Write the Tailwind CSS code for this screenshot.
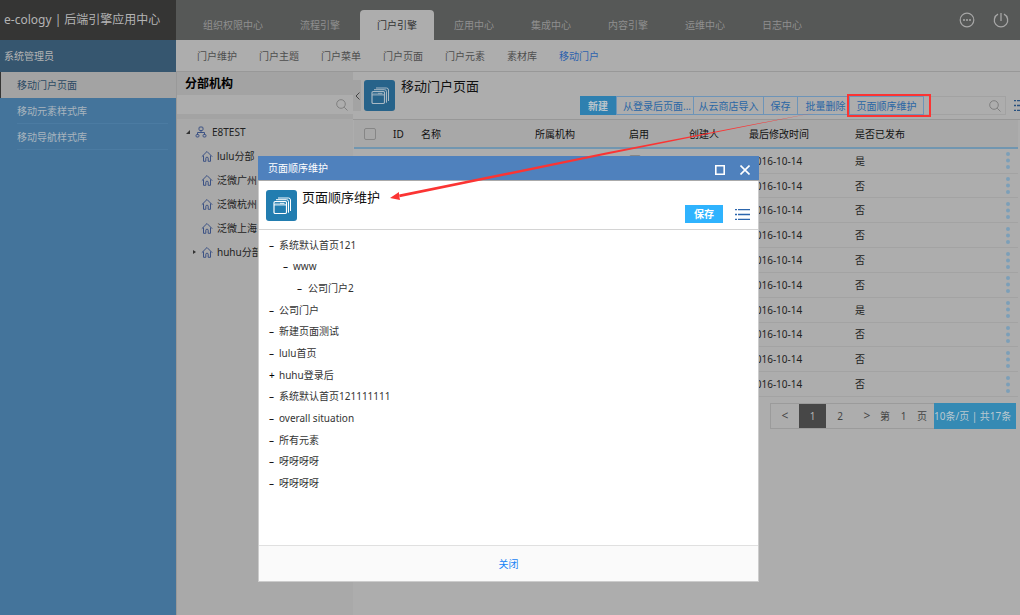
<!DOCTYPE html>
<html lang="zh-CN">
<head>
<meta charset="utf-8">
<title>e-cology | 后端引擎应用中心</title>
<script src="https://cdn.jsdelivr.net/npm/@tailwindcss/browser@4"></script>
</head>
<body class="relative flex h-screen overflow-hidden bg-[#adadad] font-['Noto_Sans','Noto_Sans_CJK_SC',sans-serif] text-[10px] leading-4 text-[#222]">
<svg class="hidden">
  <symbol id="home" viewBox="0 0 12 12"><path d="M.8 6.700 6 1.500l5.200 5.200M2.500 5.500v5.800h2.300V8.200q0-1 1.200-1t1.200 1v3.100h2.300V5.500" fill="none" stroke="currentColor"/></symbol>
  <symbol id="search" viewBox="0 0 12 12"><circle cx="5" cy="5" r="4.300" fill="none" stroke="currentColor"/><path d="m8.200 8.200 3.300 3.300" stroke="currentColor"/></symbol>
  <symbol id="pages" viewBox="0 0 31 31"><path d="M12 8h10.500q2 0 2 2v11M10 9.700h10.500q2 0 2 2v11" fill="none" stroke="currentColor"/><rect x="8" y="11.500" width="12.500" height="12" rx="1.200" fill="none" stroke="currentColor" stroke-width="1.200"/><path d="M8 14.900h12.500M9.500 13.300h1m1 0h1m1 0h5" stroke="currentColor"/></symbol>
  <symbol id="list" viewBox="0 0 15 11"><path d="M0 .5h2m1 0h12M0 5.500h2m1 0h12M0 10.500h2m1 0h12" stroke="currentColor" stroke-width="1.400"/></symbol>
</svg>

<aside class="flex w-44 shrink-0 flex-col bg-[#44749b]">
  <h1 class="flex h-10 items-center bg-[#353534] pl-1 text-[12px] whitespace-nowrap text-[#b4b4b4]">e-cology | 后端引擎应用中心</h1>
  <div class="flex h-8 items-center bg-[#36566f] pl-1 text-[#b4b4b4]">系统管理员</div>
  <nav class="flex flex-col text-[#a9b4be]">
    <a href="#" class="flex h-[26px] items-center border-l border-[#353534] bg-[#a3a3a3] pl-4 text-[#2b4a63]">移动门户页面</a>
    <a href="#" class="ml-[17px] mr-2 flex h-[26px] items-center border-b border-[#4b7ba2]">移动元素样式库</a>
    <a href="#" class="ml-[17px] mr-2 flex h-[26px] items-center border-b border-[#4b7ba2]">移动导航样式库</a>
  </nav>
</aside>

<div class="flex min-w-0 flex-1 flex-col">
  <header class="flex h-10 shrink-0 items-end justify-between bg-[#565857] pl-[10px] text-[#8f8f8f]">
    <nav class="flex gap-[3px] whitespace-nowrap">
      <a href="#" class="flex h-[30px] items-center px-[17px]">组织权限中心</a>
      <a href="#" class="flex h-[30px] items-center px-[17px]">流程引擎</a>
      <a href="#" class="flex h-[30px] items-center rounded-t bg-[#adadad] px-[17px] text-[#333]">门户引擎</a>
      <a href="#" class="flex h-[30px] items-center px-[17px]">应用中心</a>
      <a href="#" class="flex h-[30px] items-center px-[17px]">集成中心</a>
      <a href="#" class="flex h-[30px] items-center px-[17px]">内容引擎</a>
      <a href="#" class="flex h-[30px] items-center px-[17px]">运维中心</a>
      <a href="#" class="flex h-[30px] items-center px-[17px]">日志中心</a>
    </nav>
    <div class="flex gap-[18px] self-center pr-[11px] text-[#a6a6a6]">
      <button aria-label="更多"><svg class="size-4" viewBox="0 0 16 16" fill="none" stroke="currentColor"><circle cx="8" cy="8" r="6.800" stroke-width="1.200"/><path d="M4 8h2m1 0h2m1 0h2" stroke-width="1.600"/></svg></button>
      <button aria-label="退出"><svg class="size-4" viewBox="0 0 16 16" fill="none" stroke="currentColor" stroke-width="1.300"><path d="M8 1v8M5 2.200a6.700 6.700 0 1 0 6 0"/></svg></button>
    </div>
  </header>

  <nav class="flex h-8 shrink-0 items-center gap-[22px] border-b border-[#989898] pl-[21px] text-[#4d4d4d]">
    <a href="#">门户维护</a><a href="#">门户主题</a><a href="#">门户菜单</a><a href="#">门户页面</a><a href="#">门户元素</a><a href="#">素材库</a><a href="#" class="text-[#2c61ad]">移动门户</a>
  </nav>

  <div class="flex min-h-0 flex-1">
    <section class="w-[177px] shrink-0 border-l border-[#999] bg-[#a9a9a9]">
      <h2 class="flex h-[23px] items-center bg-[#a3a3a3] pl-2 text-[12px] font-bold text-black">分部机构</h2>
      <div class="flex h-[19px] items-center bg-[#adadad] pr-[5px]">
        <input aria-label="搜索分部" class="min-w-0 flex-1 outline-none">
        <button aria-label="搜索" class="text-[#7f7f7f]"><svg class="size-3"><use href="#search"/></svg></button>
      </div>
      <div class="mb-[1px] h-[5px] bg-[#a3a3a3]"></div>
      <ul>
        <li class="flex h-6 items-center pl-[9px]"><svg class="mr-[5px] size-1" viewBox="0 0 4 4"><path d="M4 0v4H0z" fill="#333"/></svg>
          <svg class="mr-[5px] size-3 text-[#3c5284]" viewBox="0 0 12 12" fill="none" stroke="currentColor"><rect x="4" y="1" width="4" height="3.500" rx="1"/><path d="M6 4.500v2M2.500 8.500v-2h7v2"/><rect x="1" y="8.500" width="3" height="2.500" rx="1"/><rect x="8" y="8.500" width="3" height="2.500" rx="1"/></svg>E8TEST</li>
        <li class="flex h-6 items-center pl-6"><svg class="mr-1 size-3 text-[#3c5284]"><use href="#home"/></svg>lulu分部</li>
        <li class="flex h-6 items-center pl-6"><svg class="mr-1 size-3 text-[#3c5284]"><use href="#home"/></svg>泛微广州</li>
        <li class="flex h-6 items-center pl-6"><svg class="mr-1 size-3 text-[#3c5284]"><use href="#home"/></svg>泛微杭州</li>
        <li class="flex h-6 items-center pl-6"><svg class="mr-1 size-3 text-[#3c5284]"><use href="#home"/></svg>泛微上海</li>
        <li class="flex h-6 items-center pl-4"><svg class="mr-1 size-1" viewBox="0 0 4 4"><path d="M0 0v4l3-2z" fill="#333"/></svg><svg class="mr-1 size-3 text-[#3c5284]"><use href="#home"/></svg>huhu分部</li>
      </ul>
    </section>

    <main class="min-w-0 flex-1">
      <div class="flex h-12 items-start border-b border-[#979797]">
        <button aria-label="收起" class="mt-2 flex h-[31px] w-2 items-center justify-center bg-[#a3a3a3] text-[#444]"><svg class="h-2 w-[5px]" viewBox="0 0 5 8"><path d="M4.500.5 1 4l3.500 3.500" fill="none" stroke="currentColor"/></svg></button>
        <svg class="mt-2 ml-[3px] size-[31px] shrink-0 rounded-[3px] bg-[#27638a] text-[#a9b9c4]"><use href="#pages"/></svg>
        <h2 class="mt-[6px] ml-[6px] text-[13px] whitespace-nowrap text-[#111]">移动门户页面</h2>
        <div class="mt-6 ml-auto flex h-[19px] items-stretch whitespace-nowrap text-[#2966a5]">
          <button class="w-9 bg-[#2e80b0] font-bold text-[#b9c4cb]">新建</button>
          <button class="w-[78px] border border-[#6d94b8] pl-1">从登录后页面...</button>
          <button class="w-[70px] border-y border-r border-[#6d94b8]">从云商店导入</button>
          <button class="w-[34px] border-y border-r border-[#6d94b8]">保存</button>
          <button class="w-[52px] border-y border-r border-[#6d94b8] pl-1">批量删除</button>
          <div class="relative flex"><button class="w-[74px] border-y border-r border-[#6d94b8]">页面顺序维护</button><span class="absolute -inset-y-[2px] -left-[3px] -right-[7px] border-2 border-[#fb3433]"></span></div>
          <div class="flex w-[82px] items-center border border-l-0 border-[#a2a2a2] pr-1">
            <input aria-label="搜索页面" class="min-w-0 flex-1 outline-none">
            <button aria-label="搜索" class="text-[#7f7f7f]"><svg class="size-3"><use href="#search"/></svg></button>
          </div>
          <button aria-label="菜单" class="ml-2 w-[6px] overflow-hidden text-[#28517f]"><svg class="h-[11px] w-[15px]"><use href="#list"/></svg></button>
        </div>
      </div>

      <table class="ml-[1px] w-[calc(100%-3px)] table-fixed border-collapse text-left">
        <colgroup><col class="w-[39px]"><col class="w-[28px]"><col class="w-[114px]"><col class="w-[94px]"><col class="w-[60px]"><col class="w-[60px]"><col class="w-[106px]"><col><col class="w-5"></colgroup>
        <thead><tr class="h-7 border-b-2 border-[#7196b0] bg-[#a8a8a8] text-[#111]">
          <th class="pl-[10px] font-normal"><input type="checkbox" aria-label="全选" class="block size-3 appearance-none rounded-[2px] border border-[#868686]"></th>
          <th class="font-normal">ID</th><th class="font-normal">名称</th><th class="font-normal">所属机构</th><th class="font-normal">启用</th><th class="font-normal">创建人</th><th class="font-normal">最后修改时间</th><th class="font-normal">是否已发布</th><th></th>
        </tr></thead>
      </table>
      <table class="ml-[1px] h-[248px] w-[calc(100%-3px)] table-fixed border-collapse">
        <colgroup><col class="w-[275px]"><col class="w-[121px]"><col class="w-[105px]"><col><col class="w-5"></colgroup>
        <tbody id="rows"></tbody>
      </table>
      <template id="row"><tr class="border-b border-[#a3a3a3]"><td></td><td class="pt-[6px] align-top"><input type="checkbox" aria-label="启用" class="block size-3 appearance-none rounded-[2px] border border-[#868686]"></td><td>2016-10-14</td><td></td><td><button aria-label="操作" class="ml-2 block"><svg class="h-[17px] w-1" viewBox="0 0 4 17" fill="#7c9fb8"><circle cx="2" cy="2" r="2"/><circle cx="2" cy="8.500" r="2"/><circle cx="2" cy="15" r="2"/></svg></button></td></tr></template>
      <script>
        for (const published of '是否否否否否是否否否') {
          const row = document.getElementById('row').content.cloneNode(true);
          row.querySelectorAll('td')[3].textContent = published;
          document.getElementById('rows').append(row);
        }
      </script>

      <div class="mt-[6px] mr-1 ml-auto flex h-[26px] w-[246px] items-stretch border border-[#9b9b9b] text-[#444]">
        <button class="w-7 shrink-0 text-[12px]">&lt;</button>
        <button class="w-[27px] shrink-0 bg-[#474747] text-[#b4b4b4]">1</button>
        <button class="w-7 shrink-0">2</button>
        <button class="w-[26px] shrink-0 text-[12px]">&gt;</button>
        <label class="flex shrink-0 items-center">第<input value="1" class="w-[27px] text-center outline-none">页</label>
        <button class="-my-[1px] -mr-[1px] ml-auto w-[82px] shrink-0 bg-[#358ab4] pr-2 whitespace-nowrap text-[#b9c8d0]">10条/页 | 共17条</button>
      </div>
    </main>
  </div>
</div>

<div role="dialog" aria-label="页面顺序维护" class="absolute top-[156px] right-[261px] bottom-[33px] left-[258px] flex flex-col border border-[#ccc] bg-white">
  <div class="-mx-[1px] -mt-[1px] flex h-[25px] shrink-0 items-center border-b border-[#aaa] bg-[#4f81bd] pr-[9px] pl-[10px] text-white">
    <span class="flex-1">页面顺序维护</span>
    <button aria-label="最大化" class="mt-1 mr-[15px]"><svg class="size-[10px]" viewBox="0 0 10 10"><path d="M.8.8h8.400v8.400H.8z" fill="none" stroke="currentColor" stroke-width="1.600"/></svg></button>
    <button aria-label="关闭窗口" class="mt-1"><svg class="size-[10px]" viewBox="0 0 10 10"><path d="m.5.5 9 9m0-9-9 9" stroke="currentColor" stroke-width="1.600"/></svg></button>
  </div>
  <div class="flex h-[49px] shrink-0 items-start border-b border-[#d4d4d4] pr-2 pl-[7px]">
    <svg class="mt-[9px] size-[31px] rounded-[3px] bg-[#227db0] text-white"><use href="#pages"/></svg>
    <h2 class="mt-2 ml-[5px] flex-1 text-[13px] text-[#111]">页面顺序维护</h2>
    <button class="mt-6 mr-3 h-[18px] w-[38px] bg-[#2fb3fe] font-bold text-white">保存</button>
    <button aria-label="列表" class="mt-7 text-[#2c66ad]"><svg class="h-[11px] w-[15px]"><use href="#list"/></svg></button>
  </div>
  <ul class="mt-1 mb-auto grid h-[260px] auto-rows-fr items-center pl-[10px] text-[#333]">
    <li class="flex"><span class="w-[10px] text-black">–</span>系统默认首页121</li>
    <li class="flex pl-[14px]"><span class="w-[10px] text-black">–</span>www</li>
    <li class="flex pl-7"><span class="w-[11px] text-black">–</span>公司门户2</li>
    <li class="flex"><span class="w-[10px] text-black">–</span>公司门户</li>
    <li class="flex"><span class="w-[10px] text-black">–</span>新建页面测试</li>
    <li class="flex"><span class="w-[10px] text-black">–</span>lulu首页</li>
    <li class="flex"><span class="w-[10px] text-black">+</span>huhu登录后</li>
    <li class="flex"><span class="w-[10px] text-black">–</span>系统默认首页121111111</li>
    <li class="flex"><span class="w-[10px] text-black">–</span>overall situation</li>
    <li class="flex"><span class="w-[10px] text-black">–</span>所有元素</li>
    <li class="flex"><span class="w-[10px] text-black">–</span>呀呀呀呀</li>
    <li class="flex"><span class="w-[10px] text-black">–</span>呀呀呀呀</li>
  </ul>
  <div class="flex h-9 shrink-0 items-center justify-center border-t border-[#e0e0e0] bg-[#fafafa]"><button class="text-[#1784f5]">关闭</button></div>
</div>

<svg class="pointer-events-none absolute top-[108px] left-[388px] h-[100px] w-[440px]" viewBox="388 108 440 100" fill="#fb3433"><path d="m818 112-212 40.500L399 194.500l.6 2.800 207-42.800Z"/><path d="m390 198 9-6v3l1 5Z"/></svg>
</body>
</html>
